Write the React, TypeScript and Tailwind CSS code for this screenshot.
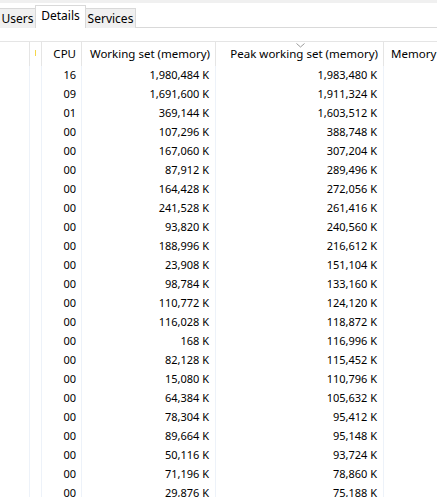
import React from 'react';

interface Row {
  cpu: string;
  working: string;
  peak: string;
}

const rows: Row[] = [
  { cpu: '16', working: '1,980,484 K', peak: '1,983,480 K' },
  { cpu: '09', working: '1,691,600 K', peak: '1,911,324 K' },
  { cpu: '01', working: '369,144 K', peak: '1,603,512 K' },
  { cpu: '00', working: '107,296 K', peak: '388,748 K' },
  { cpu: '00', working: '167,060 K', peak: '307,204 K' },
  { cpu: '00', working: '87,912 K', peak: '289,496 K' },
  { cpu: '00', working: '164,428 K', peak: '272,056 K' },
  { cpu: '00', working: '241,528 K', peak: '261,416 K' },
  { cpu: '00', working: '93,820 K', peak: '240,560 K' },
  { cpu: '00', working: '188,996 K', peak: '216,612 K' },
  { cpu: '00', working: '23,908 K', peak: '151,104 K' },
  { cpu: '00', working: '98,784 K', peak: '133,160 K' },
  { cpu: '00', working: '110,772 K', peak: '124,120 K' },
  { cpu: '00', working: '116,028 K', peak: '118,872 K' },
  { cpu: '00', working: '168 K', peak: '116,996 K' },
  { cpu: '00', working: '82,128 K', peak: '115,452 K' },
  { cpu: '00', working: '15,080 K', peak: '110,796 K' },
  { cpu: '00', working: '64,384 K', peak: '105,632 K' },
  { cpu: '00', working: '78,304 K', peak: '95,412 K' },
  { cpu: '00', working: '89,664 K', peak: '95,148 K' },
  { cpu: '00', working: '50,116 K', peak: '93,724 K' },
  { cpu: '00', working: '71,196 K', peak: '78,860 K' },
  { cpu: '00', working: '29,876 K', peak: '75,188 K' },
];

const cols = 'grid grid-cols-[30px_12px_40px_134px_168px_1fr]';

const App: React.FC = () => {
  return (
    <div
      className="w-[437px] h-[497px] overflow-hidden bg-white text-[11px] text-black"
      style={{ fontFamily: '"Noto Sans", "Open Sans", sans-serif' }}
    >
      {/* Tab strip */}
      <div className="h-[3px] bg-[#f0f0f0]" />
      <div className="h-[25px] flex items-end border-b border-[#d9d9d9] bg-white text-[12px]">
        <div className="h-[20px] w-[36px] flex items-center justify-center bg-[#f0f0f0] border border-b-0 border-l-0 border-[#d9d9d9] -mb-px">
          Users
        </div>
        <div className="h-[23px] w-[51px] flex items-center justify-center bg-white border border-b-0 border-[#d9d9d9] -ml-px -mb-px pb-[3px]">
          Details
        </div>
        <div className="h-[20px] w-[51px] flex items-center justify-center bg-[#f0f0f0] border border-b-0 border-[#d9d9d9] -ml-px -mb-px">
          Services
        </div>
      </div>
      <div className="h-[13px]" />

      {/* Header */}
      <div className={`${cols} h-[25px] border-t border-[#e5e5e5] text-[11.5px]`}>
        <div className="border-r border-[#e5e5e5]" />
        <div className="border-r border-[#e5e5e5] flex items-center justify-center">
          <div className="w-px h-[6px] bg-[#f5d74a] -mt-[2px]" />
        </div>
        <div className="border-r border-[#e5e5e5] flex items-center justify-end pr-[5px]">CPU</div>
        <div className="border-r border-[#e5e5e5] flex items-center justify-end pr-[5px] whitespace-nowrap">
          Working set (memory)
        </div>
        <div className="relative border-r border-[#e5e5e5] flex items-center justify-end pr-[5px] whitespace-nowrap">
          <svg className="absolute left-[80px] top-[1px]" width="9" height="5" viewBox="0 0 9 5">
            <path d="M0.5 0.5 L4.5 4 L8.5 0.5" fill="none" stroke="#9a9a9a" strokeWidth="1" />
          </svg>
          Peak working set (memory)
        </div>
        <div className="flex items-center pl-[7px] whitespace-nowrap overflow-hidden">Memory (active private working set)</div>
      </div>

      {/* Body */}
      <div>
        {rows.map((r, i) => (
          <div key={i} className={`${cols} h-[19px]`}>
            <div className="border-r border-[#edf2f9]" />
            <div className="border-r border-[#edf2f9]" />
            <div className="border-r border-[#edf2f9] flex items-center justify-end pr-[5px]">{r.cpu}</div>
            <div className="border-r border-[#edf2f9] flex items-center justify-end pr-[6px] whitespace-nowrap">
              {r.working}
            </div>
            <div className="border-r border-[#edf2f9] flex items-center justify-end pr-[6px] whitespace-nowrap">
              {r.peak}
            </div>
            <div />
          </div>
        ))}
      </div>
    </div>
  );
};

export default App;
